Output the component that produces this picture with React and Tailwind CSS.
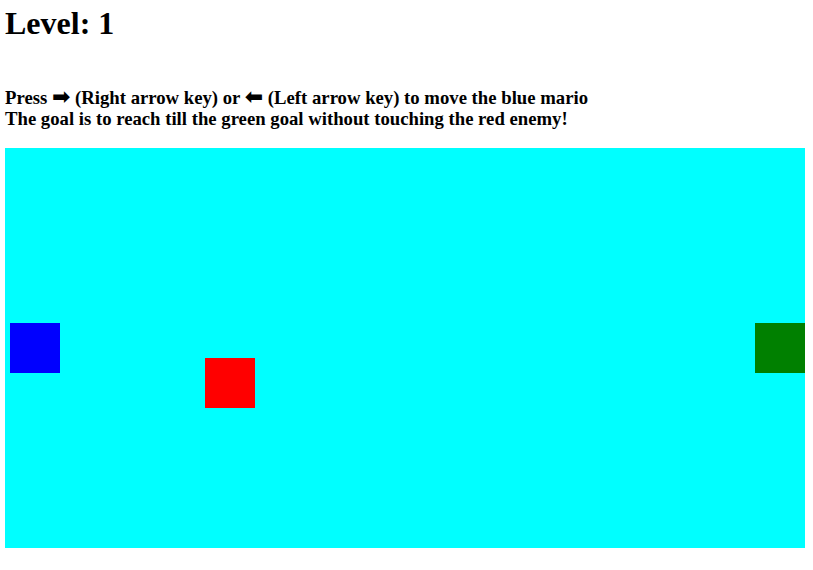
export default function App() {
  const arrow = { fontFamily: '"DejaVu Sans", sans-serif' };
  return (
    <div className="flex flex-col px-[5px] pt-[5px] bg-white min-h-[570px] text-black" style={{ fontFamily: '"Liberation Serif", "DejaVu Serif", serif' }}>
      <h1 className="text-[32px] font-bold leading-[37px]">Level: 1</h1>
      <div className="mt-[44px] flex flex-col text-[18.72px] font-bold leading-[22px]">
        <div className="h-[22px]">Press <span className="text-[22px] leading-none" style={arrow}>➡</span> (Right arrow key) or <span className="text-[22px] leading-none" style={arrow}>⬅</span> (Left arrow key) to move the blue mario</div>
        <div className="h-[22px]">The goal is to reach till the green goal without touching the red enemy!</div>
      </div>
      <div className="relative mt-[18px] w-[800px] h-[400px] bg-[#00ffff]">
        <div className="absolute left-[5px] top-[175px] w-[50px] h-[50px] bg-[#0000ff]" />
        <div className="absolute left-[200px] top-[210px] w-[50px] h-[50px] bg-[#ff0000]" />
        <div className="absolute left-[750px] top-[175px] w-[50px] h-[50px] bg-[#008000]" />
      </div>
    </div>
  );
}
